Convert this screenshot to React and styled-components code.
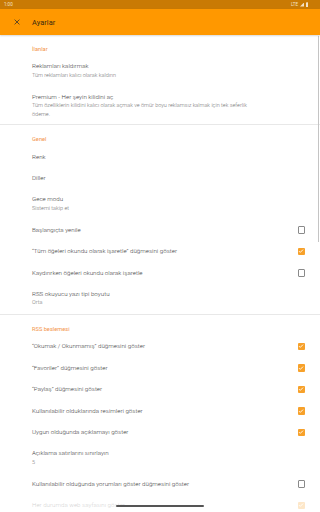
import React from "react";
import styled, { createGlobalStyle } from "styled-components";

const Global = createGlobalStyle`
  html, body { margin: 0; padding: 0; background: #fff; }
  body { font-family: Roboto, "Noto Sans", "Liberation Sans", sans-serif; }
`;

const Screen = styled.div`
  position: relative;
  width: 320px;
  height: 512px;
  overflow: hidden;
  display: flex;
  flex-direction: column;
  background: #fff;
`;

const StatusBar = styled.div`
  height: 9px;
  flex: none;
  background: #c97a04;
  display: flex;
  align-items: center;
  justify-content: space-between;
  padding: 0 4px;
  font-size: 4.5px;
  color: #f3e2c8;
`;

const StatusIcons = styled.div`
  display: flex;
  align-items: center;
  gap: 1.5px;
  margin-right: 8px;
`;

const Toolbar = styled.div`
  height: 26px;
  flex: none;
  background: #ff9800;
  display: flex;
  align-items: center;
  box-shadow: 0 1px 1.5px rgba(0, 0, 0, 0.15);
  position: relative;
  z-index: 1;
`;

const CloseButton = styled.div`
  width: 32px;
  display: flex;
  justify-content: center;
  align-items: center;
  padding-left: 1px;
  box-sizing: border-box;
`;

const ToolbarTitle = styled.div`
  font-size: 7.4px;
  font-weight: 400;
  color: #3a2a10;
  letter-spacing: 0.05px;
`;

const Content = styled.div`
  flex: 1;
  display: flex;
  flex-direction: column;
`;

const SectionHeader = styled.div`
  height: 21px;
  box-sizing: border-box;
  padding: 10px 15px 0 32px;
  font-size: 5.7px;
  line-height: 8px;
  color: #f3944a;
  flex: none;
`;

const heights = { 1: 21.5, 2: 30, 3: 38 };

const Row = styled.div`
  height: ${(p) => heights[p.$lines]}px;
  flex: none;
  box-sizing: border-box;
  padding: ${(p) => (p.$lines === 3 ? "2px" : "0")} 15px 0 32px;
  display: flex;
  align-items: center;
  justify-content: space-between;
  gap: 12px;
`;

const RowText = styled.div`
  display: flex;
  flex-direction: column;
  min-width: 0;
`;

const Title = styled.div`
  font-size: 6.2px;
  font-weight: 300;
  line-height: 8.5px;
  color: #444;
  white-space: nowrap;
`;

const Summary = styled.div`
  font-size: 5.5px;
  font-weight: 300;
  line-height: 9px;
  color: #777;
`;

const Box = styled.div`
  flex: none;
  width: 7.5px;
  height: 7.5px;
  box-sizing: border-box;
  border-radius: 1px;
  border: ${(p) => (p.$checked ? "none" : "1px solid #8a8a8a")};
  background: ${(p) => (p.$checked ? "#f7a12a" : "transparent")};
  display: flex;
  align-items: center;
  justify-content: center;
`;

const Divider = styled.div`
  height: 1px;
  flex: none;
  background: #e8e8e8;
`;

const ScrollThumb = styled.div`
  position: absolute;
  right: 1px;
  top: 36px;
  width: 1.5px;
  height: 206px;
  background: #c4c4c4;
`;

const NavOverlay = styled.div`
  position: absolute;
  left: 0;
  right: 0;
  bottom: 0;
  height: 11px;
  background: rgba(255, 255, 255, 0.75);
  display: flex;
  justify-content: center;
  align-items: flex-start;
  padding-top: 4px;
  box-sizing: border-box;
`;

const NavHandle = styled.div`
  width: 88px;
  height: 1.5px;
  border-radius: 1px;
  background: #555;
`;

function Checkbox({ checked }) {
  return (
    <Box $checked={checked}>
      {checked && (
        <svg width="6" height="6" viewBox="0 0 24 24">
          <path d="M4 12.5l5 5L20 6.5" fill="none" stroke="#fff" strokeWidth="3.5" />
        </svg>
      )}
    </Box>
  );
}

function Pref({ title, summary, lines = 1, check }) {
  const sums = Array.isArray(summary) ? summary : summary ? [summary] : [];
  return (
    <Row $lines={lines}>
      <RowText>
        <Title>{title}</Title>
        {sums.map((s, i) => (
          <Summary key={i}>{s}</Summary>
        ))}
      </RowText>
      {check !== undefined && <Checkbox checked={check} />}
    </Row>
  );
}

export default function App() {
  return (
    <Screen>
      <Global />
      <StatusBar>
        <span>1:00</span>
        <StatusIcons>
          <span>LTE</span>
          <svg width="4.5" height="4.5" viewBox="0 0 10 10">
            <path d="M10 0V10H0Z" fill="#f3e2c8" />
          </svg>
          <svg width="2.5" height="5" viewBox="0 0 5 10">
            <rect x="0" y="1" width="5" height="9" fill="#f3e2c8" />
            <rect x="1.5" y="0" width="2" height="1" fill="#f3e2c8" />
          </svg>
        </StatusIcons>
      </StatusBar>
      <Toolbar>
        <CloseButton>
          <svg width="6" height="6" viewBox="0 0 10 10">
            <path d="M1 1L9 9M9 1L1 9" stroke="#2a2a2a" strokeWidth="1.2" />
          </svg>
        </CloseButton>
        <ToolbarTitle>Ayarlar</ToolbarTitle>
      </Toolbar>
      <Content>
        <SectionHeader>İlanlar</SectionHeader>
        <Pref lines={2} title="Reklamları kaldırmak" summary="Tüm reklamları kalıcı olarak kaldırın" />
        <Pref
          lines={3}
          title="Premium - Her şeyin kilidini aç"
          summary={[
            "Tüm özelliklerin kilidini kalıcı olarak açmak ve ömür boyu reklamsız kalmak için tek seferlik",
            "ödeme.",
          ]}
        />
        <Divider />
        <SectionHeader>Genel</SectionHeader>
        <Pref title="Renk" />
        <Pref title="Diller" />
        <Pref lines={2} title="Gece modu" summary="Sistemi takip et" />
        <Pref title="Başlangıçta yenile" check={false} />
        <Pref title="“Tüm öğeleri okundu olarak işaretle” düğmesini göster" check={true} />
        <Pref title="Kaydırırken öğeleri okundu olarak işaretle" check={false} />
        <Pref lines={2} title="RSS okuyucu yazı tipi boyutu" summary="Orta" />
        <Divider />
        <SectionHeader>RSS beslemesi</SectionHeader>
        <Pref title="“Okumak / Okunmamış” düğmesini göster" check={true} />
        <Pref title="“Favoriler” düğmesini göster" check={true} />
        <Pref title="“Paylaş” düğmesini göster" check={true} />
        <Pref title="Kullanılabilir olduklarında resimleri göster" check={true} />
        <Pref title="Uygun olduğunda açıklamayı göster" check={true} />
        <Pref lines={2} title="Açıklama satırlarını sınırlayın" summary="5" />
        <Pref title="Kullanılabilir olduğunda yorumları göster düğmesini göster" check={false} />
        <Pref title="Her durumda web sayfasını göster" check={true} />
      </Content>
      <ScrollThumb />
      <NavOverlay>
        <NavHandle />
      </NavOverlay>
    </Screen>
  );
}
